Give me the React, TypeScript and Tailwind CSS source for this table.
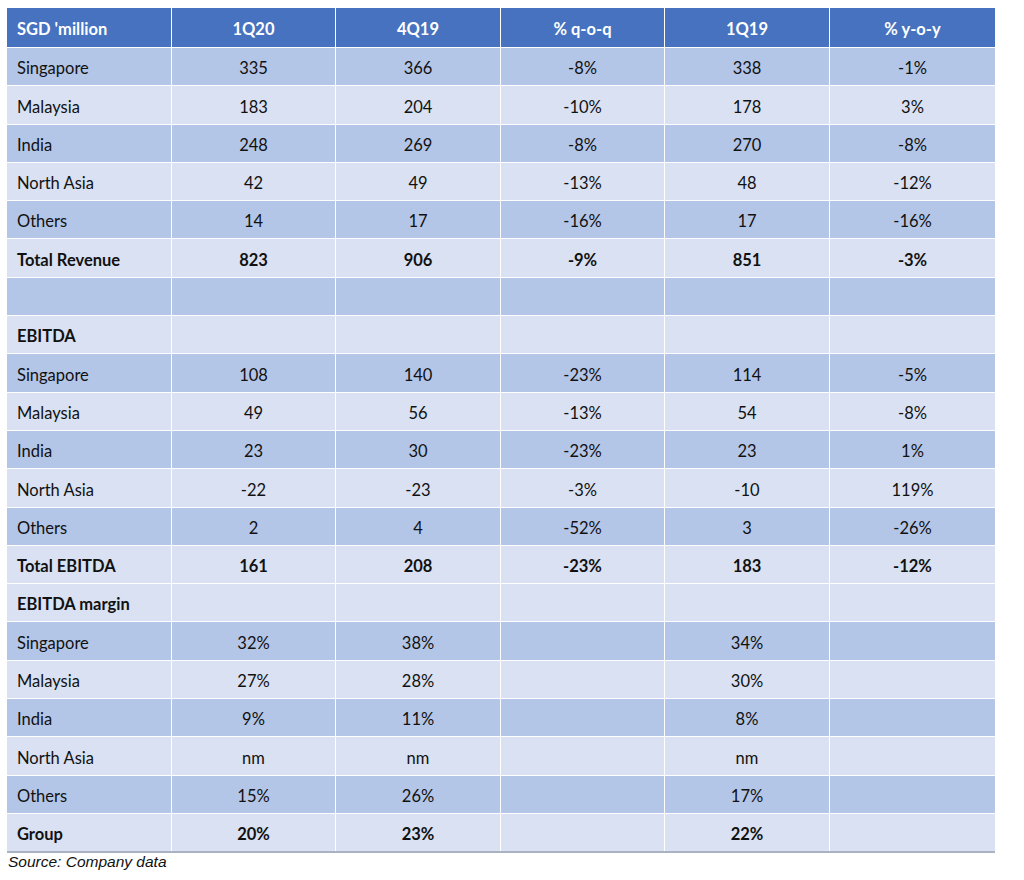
import React from "react";

type Row = {
  label: string;
  cells: string[];
  bold?: boolean;
  dark: boolean;
};

const rows: Row[] = [
  { label: "Singapore", cells: ["335", "366", "-8%", "338", "-1%"], dark: true },
  { label: "Malaysia", cells: ["183", "204", "-10%", "178", "3%"], dark: false },
  { label: "India", cells: ["248", "269", "-8%", "270", "-8%"], dark: true },
  { label: "North Asia", cells: ["42", "49", "-13%", "48", "-12%"], dark: false },
  { label: "Others", cells: ["14", "17", "-16%", "17", "-16%"], dark: true },
  { label: "Total Revenue", cells: ["823", "906", "-9%", "851", "-3%"], bold: true, dark: false },
  { label: "", cells: ["", "", "", "", ""], dark: true },
  { label: "EBITDA", cells: ["", "", "", "", ""], bold: true, dark: false },
  { label: "Singapore", cells: ["108", "140", "-23%", "114", "-5%"], dark: true },
  { label: "Malaysia", cells: ["49", "56", "-13%", "54", "-8%"], dark: false },
  { label: "India", cells: ["23", "30", "-23%", "23", "1%"], dark: true },
  { label: "North Asia", cells: ["-22", "-23", "-3%", "-10", "119%"], dark: false },
  { label: "Others", cells: ["2", "4", "-52%", "3", "-26%"], dark: true },
  { label: "Total EBITDA", cells: ["161", "208", "-23%", "183", "-12%"], bold: true, dark: false },
  { label: "EBITDA margin", cells: ["", "", "", "", ""], bold: true, dark: false },
  { label: "Singapore", cells: ["32%", "38%", "", "34%", ""], dark: true },
  { label: "Malaysia", cells: ["27%", "28%", "", "30%", ""], dark: false },
  { label: "India", cells: ["9%", "11%", "", "8%", ""], dark: true },
  { label: "North Asia", cells: ["nm", "nm", "", "nm", ""], dark: false },
  { label: "Others", cells: ["15%", "26%", "", "17%", ""], dark: true },
  { label: "Group", cells: ["20%", "23%", "", "22%", ""], bold: true, dark: false },
];

const headers = ["1Q20", "4Q19", "% q-o-q", "1Q19", "% y-o-y"];

export default function App() {
  return (
    <div className="w-[1024px] h-[880px] bg-white pt-2 pl-[7px] font-['Lato',sans-serif] text-[16.5px] text-[#111]">
      <div className="w-[988px] grid grid-cols-[165px_164px_165px_164px_165px_165px] border-b-2 border-[#a9b3c2]">
        {/* header row */}
        <div className="h-[39px] pt-[4px] bg-[#4672c0] border-r border-white flex items-center pl-[10px] text-white font-bold">
          SGD 'million
        </div>
        {headers.map((h, i) => (
          <div
            key={h}
            className={`h-[39px] pt-[4px] bg-[#4672c0] flex items-center justify-center text-white font-bold ${
              i < headers.length - 1 ? "border-r border-white" : ""
            }`}
          >
            {h}
          </div>
        ))}

        {rows.map((r, ri) => {
          const bg = r.dark ? "bg-[#b4c6e7]" : "bg-[#d9e1f2]";
          const weight = r.bold ? "font-bold" : "";
          return (
            <React.Fragment key={ri}>
              <div className={`h-[38.3px] pt-[4px] ${bg} ${weight} border-r border-t border-white flex items-center pl-[10px]`}>
                {r.label}
              </div>
              {r.cells.map((c, ci) => (
                <div
                  key={ci}
                  className={`h-[38.3px] pt-[4px] ${bg} ${weight} border-t border-white flex items-center justify-center ${
                    ci < r.cells.length - 1 ? "border-r" : ""
                  }`}
                >
                  {c}
                </div>
              ))}
            </React.Fragment>
          );
        })}
      </div>
      <div className="pl-[1px] leading-[18px] font-['Liberation_Sans',Arial,sans-serif] italic text-[15.5px] text-[#111]">
        Source: Company data
      </div>
    </div>
  );
}
